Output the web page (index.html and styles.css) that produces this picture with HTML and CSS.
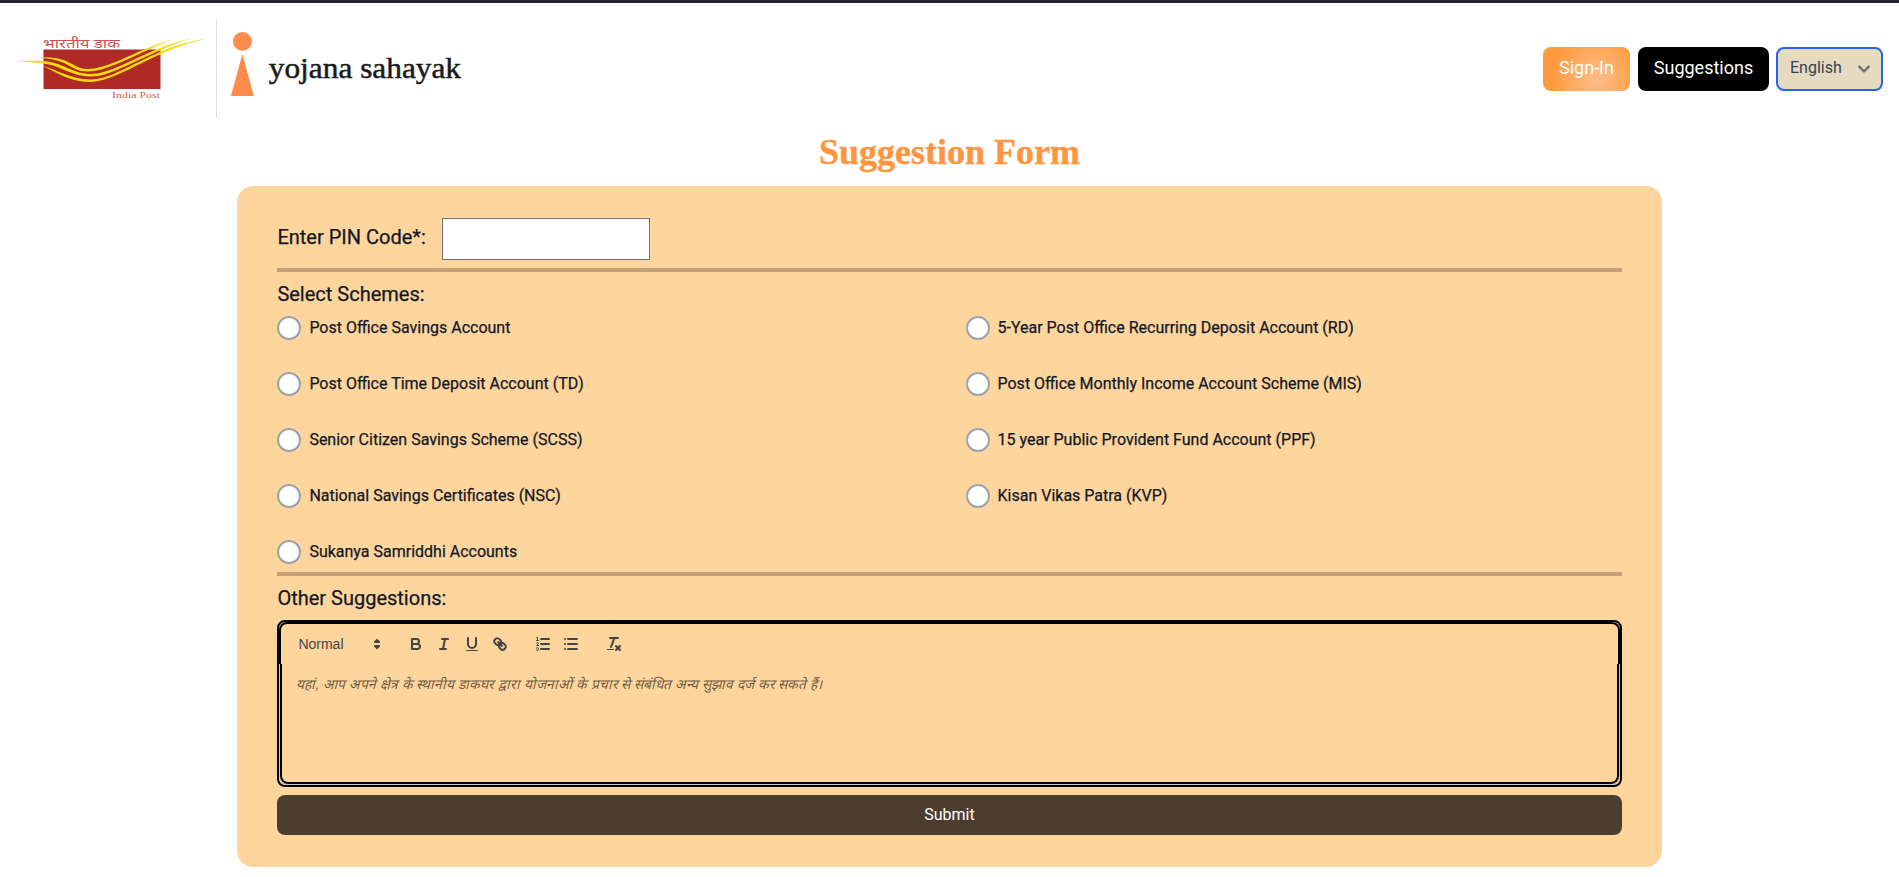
FILE: index.html
```html
<!DOCTYPE html>
<html lang="en">
<head>
<meta charset="utf-8">
<title>Suggestion Form</title>
<link rel="stylesheet" href="styles.css">
</head>
<body>
<header class="site-header">
  <div class="brand">
    <svg class="logo-post" viewBox="14 19 202 99" width="202" height="99">
      <rect x="43.5" y="49.5" width="117" height="39.5" fill="#b02a25"/>
      <text x="43" y="47.5" class="logo-hindi" textLength="77" lengthAdjust="spacingAndGlyphs">भारतीय डाक</text>
      <text x="112" y="97.5" class="logo-en" textLength="48" lengthAdjust="spacingAndGlyphs">India Post</text>
      <path class="swoosh" d="M17 61C30 60.500 36 60.500 43 61C62 62 72 73.500 90 74C108 74.500 130 60 160 48C170 44 182 40.500 193 38C182 41 170 46 160 50.500C130 63 108 77 90 76.500C70 76 60 65 43 63.500C34 62.500 26 62 17 61Z"/>
      <path class="swoosh" d="M38 57.500C48 57 58 57.500 66 61C76 66 80 69 88 69C104 69 128 56 150 47C158 44 166 41 173 39C166 42 158 45 150 49C128 59 104 71.500 88 71.500C78 71.500 74 68 64 63C56 59.500 48 58.500 38 57.500Z"/>
      <path class="swoosh" d="M43 66C58 70 70 79 90 79.500C108 80 130 65 160 52C176 45 192 41 207 38.500C192 42 176 47 160 54.500C130 68 108 82 90 82C70 82 58 73 43 66Z"/>
    </svg>
    <svg class="logo-yojana" viewBox="217 19 260 99" width="260" height="99">
      <circle cx="242.500" cy="41.300" r="9.500" fill="#ff8c4b"/>
      <polygon points="242.500,54 254,96 231,96" fill="#ff8c4b"/>
      <text x="269" y="78" class="logo-name" textLength="193" lengthAdjust="spacingAndGlyphs">yojana sahayak</text>
    </svg>
  </div>
  <nav class="actions">
    <a class="btn btn-signin" href="#">Sign-In</a>
    <a class="btn btn-suggest" href="#">Suggestions</a>
    <select class="lang">
      <option>English</option>
    </select>
  </nav>
</header>

<main>
  <h1 class="title">Suggestion Form</h1>
  <form class="card">
    <div class="pin-row">
      <label class="field-label pin-label" for="pin">Enter PIN Code*:</label>
      <input class="pin-input" id="pin" type="text">
    </div>
    <hr class="rule">
    <div class="field-label section-label">Select Schemes:</div>
    <div class="schemes">
      <label class="scheme"><input type="radio" name="s1"><span>Post Office Savings Account</span></label>
      <label class="scheme"><input type="radio" name="s2"><span>5-Year Post Office Recurring Deposit Account (RD)</span></label>
      <label class="scheme"><input type="radio" name="s3"><span>Post Office Time Deposit Account (TD)</span></label>
      <label class="scheme"><input type="radio" name="s4"><span>Post Office Monthly Income Account Scheme (MIS)</span></label>
      <label class="scheme"><input type="radio" name="s5"><span>Senior Citizen Savings Scheme (SCSS)</span></label>
      <label class="scheme"><input type="radio" name="s6"><span>15 year Public Provident Fund Account (PPF)</span></label>
      <label class="scheme"><input type="radio" name="s7"><span>National Savings Certificates (NSC)</span></label>
      <label class="scheme"><input type="radio" name="s8"><span>Kisan Vikas Patra (KVP)</span></label>
      <label class="scheme"><input type="radio" name="s9"><span>Sukanya Samriddhi Accounts</span></label>
    </div>
    <hr class="rule">
    <div class="field-label section-label">Other Suggestions:</div>
    <div class="editor">
      <div class="toolbar">
        <span class="picker">
          <span>Normal</span>
          <svg viewBox="0 0 18 18" width="18" height="18"><polygon class="ql-stroke" points="7 11 9 13 11 11 7 11"/><polygon class="ql-stroke" points="7 7 9 5 11 7 7 7"/></svg>
        </span>
        <span class="formats">
          <span class="tool"><svg viewBox="0 0 18 18" width="18" height="18"><path class="ql-stroke" d="M5,4H9.5A2.5,2.5,0,0,1,12,6.5v0A2.5,2.5,0,0,1,9.5,9H5A0,0,0,0,1,5,9V4A0,0,0,0,1,5,4Z"/><path class="ql-stroke" d="M5,9h5.5A2.5,2.5,0,0,1,13,11.500v0A2.5,2.5,0,0,1,10.500,14H5a0,0,0,0,1,0,0V9A0,0,0,0,1,5,9Z"/></svg></span>
          <span class="tool"><svg viewBox="0 0 18 18" width="18" height="18"><line class="ql-stroke" x1="7" x2="13" y1="4" y2="4"/><line class="ql-stroke" x1="5" x2="11" y1="14" y2="14"/><line class="ql-stroke" x1="8" x2="10" y1="14" y2="4"/></svg></span>
          <span class="tool"><svg viewBox="0 0 18 18" width="18" height="18"><path class="ql-stroke" d="M5,3V9a4.012,4.012,0,0,0,4,4H9a4.012,4.012,0,0,0,4-4V3"/><rect class="ql-fill" height="1" rx="0.5" ry="0.5" width="12" x="3" y="15"/></svg></span>
          <span class="tool"><svg viewBox="0 0 18 18" width="18" height="18"><line class="ql-stroke" x1="7" x2="11" y1="7" y2="11"/><path class="ql-stroke" d="M8.9,4.577a3.476,3.476,0,0,1,.36,4.679A3.476,3.476,0,0,1,4.577,8.9C3.185,7.5,2.035,6.4,4.217,4.217S7.5,3.185,8.9,4.577Z"/><path class="ql-stroke" d="M13.423,9.1a3.476,3.476,0,0,0-4.679-.36,3.476,3.476,0,0,0,.36,4.679c1.392,1.392,2.5,2.542,4.679.36S14.815,10.5,13.423,9.1Z"/></svg></span>
        </span>
        <span class="formats">
          <span class="tool"><svg viewBox="0 0 18 18" width="18" height="18"><line class="ql-stroke" x1="7" x2="15" y1="4" y2="4"/><line class="ql-stroke" x1="7" x2="15" y1="9" y2="9"/><line class="ql-stroke" x1="7" x2="15" y1="14" y2="14"/><line class="ql-stroke ql-thin" x1="2.5" x2="4.5" y1="5.5" y2="5.5"/><path class="ql-fill" d="M3.5,6A0.5,0.5,0,0,1,3,5.5V3.085l-0.276.138A0.5,0.5,0,0,1,2.053,3c-0.124-.247-0.023-0.324.224-0.447l1-.5A0.5,0.5,0,0,1,4,2.5v3A0.5,0.5,0,0,1,3.5,6Z"/><path class="ql-stroke ql-thin" d="M4.5,10.5h-2c0-.234,1.85-1.076,1.85-2.234A0.959,0.959,0,0,0,2.5,8.156"/><path class="ql-stroke ql-thin" d="M2.5,14.846a0.959,0.959,0,0,0,1.85-.109A0.7,0.7,0,0,0,3.75,14a0.688,0.688,0,0,0,.6-0.736,0.959,0.959,0,0,0-1.85-.109"/></svg></span>
          <span class="tool"><svg viewBox="0 0 18 18" width="18" height="18"><line class="ql-stroke" x1="6" x2="15" y1="4" y2="4"/><line class="ql-stroke" x1="6" x2="15" y1="9" y2="9"/><line class="ql-stroke" x1="6" x2="15" y1="14" y2="14"/><line class="ql-stroke" x1="3" x2="3" y1="4" y2="4"/><line class="ql-stroke" x1="3" x2="3" y1="9" y2="9"/><line class="ql-stroke" x1="3" x2="3" y1="14" y2="14"/></svg></span>
        </span>
        <span class="formats">
          <span class="tool"><svg viewBox="0 0 18 18" width="18" height="18"><line class="ql-stroke" x1="5" x2="13" y1="3" y2="3"/><line class="ql-stroke" x1="6" x2="9.35" y1="12" y2="3"/><line class="ql-stroke" x1="11" x2="15" y1="11" y2="15"/><line class="ql-stroke" x1="15" x2="11" y1="11" y2="15"/><rect class="ql-fill" height="1" rx="0.5" ry="0.5" width="7" x="2" y="14"/></svg></span>
        </span>
      </div>
      <div class="ql-container">
        <div class="ql-editor">यहां, आप अपने क्षेत्र के स्थानीय डाकघर द्वारा योजनाओं के प्रचार से संबंधित अन्य सुझाव दर्ज कर सकते हैं।</div>
      </div>
    </div>
    <button class="submit" type="button">Submit</button>
  </form>
</main>
</body>
</html>
```

FILE: styles.css
```css
* {
  box-sizing: border-box;
}

html,
body {
  margin: 0;
  padding: 0;
  background: #fff;
  font-family: Roboto, "Liberation Sans", sans-serif;
  overflow: hidden;
}

body {
  border-top: 3px solid #212529;
}

.site-header {
  display: flex;
  justify-content: space-between;
  align-items: center;
  padding: 16px 16px 16px 14px;
}

.brand {
  display: flex;
  align-items: stretch;
}

.logo-post {
  display: block;
}

.logo-yojana {
  display: block;
  border-left: 1px solid #ddd;
}

.swoosh {
  fill: #f7d90c;
}

.logo-hindi {
  font-family: "Noto Sans", "Liberation Serif", serif;
  font-size: 12px;
  fill: #cc5450;
}

.logo-en {
  font-family: "Liberation Serif", serif;
  font-size: 9px;
  fill: #c9605c;
}

.logo-name {
  font-family: "Liberation Serif", serif;
  font-size: 30px;
  fill: #1a1a1a;
  stroke: #1a1a1a;
  stroke-width: 0.5px;
}

.actions {
  display: flex;
  align-items: center;
  gap: 8px;
}

.btn {
  display: flex;
  align-items: center;
  justify-content: center;
  height: 44px;
  padding-bottom: 2px;
  border-radius: 8px;
  color: #fff;
  font-size: 18px;
  text-decoration: none;
}

.btn-signin {
  width: 87px;
  background: radial-gradient(circle at 62% 70%, #ffbe8a 0%, #ff9a3c 75%);
}

.btn-suggest {
  width: 131px;
  background: #000;
}

.lang {
  appearance: none;
  width: 107px;
  height: 44px;
  margin-left: -1px;
  padding: 0 32px 2px 12px;
  border: 2px solid #2563eb;
  border-radius: 8px;
  color: #374151;
  font-family: Roboto, sans-serif;
  font-size: 16px;
  background: #e4dbc1 url("data:image/svg+xml,%3Csvg xmlns='http://www.w3.org/2000/svg' viewBox='0 0 20 20'%3E%3Cpath d='M6 8l4 4 4-4' fill='none' stroke='%236b7280' stroke-width='2' stroke-linecap='round' stroke-linejoin='round'/%3E%3C/svg%3E") no-repeat right 5px center / 24px 24px;
}

.title {
  margin: 0 0 16px;
  color: #ff953f;
  font-family: "Liberation Serif", serif;
  font-size: 36px;
  font-weight: 700;
  line-height: 36px;
  -webkit-text-stroke: 0.4px #ff953f;
  text-align: center;
}

.card {
  width: 75%;
  margin: 0 auto;
  padding: 32px 40px;
  border-radius: 16px;
  background: #ffd59e;
  color: #111827;
}

.pin-row {
  display: flex;
  align-items: center;
  gap: 16px;
}

.field-label {
  font-size: 20px;
  font-weight: 400;
  line-height: 28px;
  -webkit-text-stroke: 0.25px #111827;
}

.pin-label {
  padding-bottom: 4px;
}

.pin-input {
  width: 208px;
  height: 42px;
  border: 1px solid #6b7280;
  background: #fff;
}

.rule {
  height: 4px;
  margin: 8px 0;
  border: 0;
  background: #c3a078;
}

.section-label {
  margin-bottom: 8px;
}

.schemes {
  display: grid;
  grid-template-columns: 1fr 1fr;
  gap: 32px;
}

.scheme {
  display: flex;
  align-items: center;
  gap: 8px;
  height: 24px;
  font-size: 16px;
  font-weight: 400;
  -webkit-text-stroke: 0.25px #111827;
}

.scheme span {
  padding-bottom: 1px;
}

.scheme input {
  appearance: none;
  width: 24px;
  height: 24px;
  margin: 0;
  border: 2px solid #9ca3af;
  border-radius: 50%;
  background: #fff;
}

.editor {
  display: flex;
  flex-direction: column;
  border: 2px solid #000;
  border-radius: 8px;
}

.toolbar {
  display: flex;
  align-items: center;
  height: 42px;
  padding: 8px;
  border: 2px solid #000;
  border-bottom: 0;
  border-radius: 8px 8px 0 0;
  font-family: "Liberation Sans", sans-serif;
  font-size: 14px;
  color: #444;
}

.toolbar svg {
  display: block;
}

.picker {
  display: flex;
  align-items: center;
  justify-content: space-between;
  width: 98px;
  padding: 0 1px 0 9px;
  margin-right: 15px;
}

.formats {
  display: flex;
  margin-right: 15px;
}

.tool {
  display: flex;
  align-items: center;
  justify-content: center;
  width: 28px;
  height: 24px;
}

.ql-stroke {
  fill: none;
  stroke: #444;
  stroke-width: 2;
  stroke-linecap: round;
  stroke-linejoin: round;
}

.ql-thin {
  stroke-width: 1;
}

.ql-fill {
  fill: #444;
}

.ql-container {
  border: 1px solid #ccc;
  border-top: 0;
  border-radius: 0 0 8px 8px;
}

.ql-editor {
  height: 120px;
  padding: 11px 14px;
  border: 2px solid #000;
  border-top: 0;
  border-radius: 0 0 8px 8px;
  color: rgba(0, 0, 0, 0.6);
  font-family: "Liberation Sans", sans-serif;
  font-size: 13.8px;
  font-style: italic;
  line-height: 1.42;
}

.submit {
  display: block;
  width: 100%;
  height: 40px;
  margin-top: 8px;
  padding: 0 0 2px;
  border: 0;
  border-radius: 8px;
  background: #4c3e2f;
  color: #fff;
  font-family: Roboto, sans-serif;
  font-size: 16px;
  font-weight: 400;
}
```
